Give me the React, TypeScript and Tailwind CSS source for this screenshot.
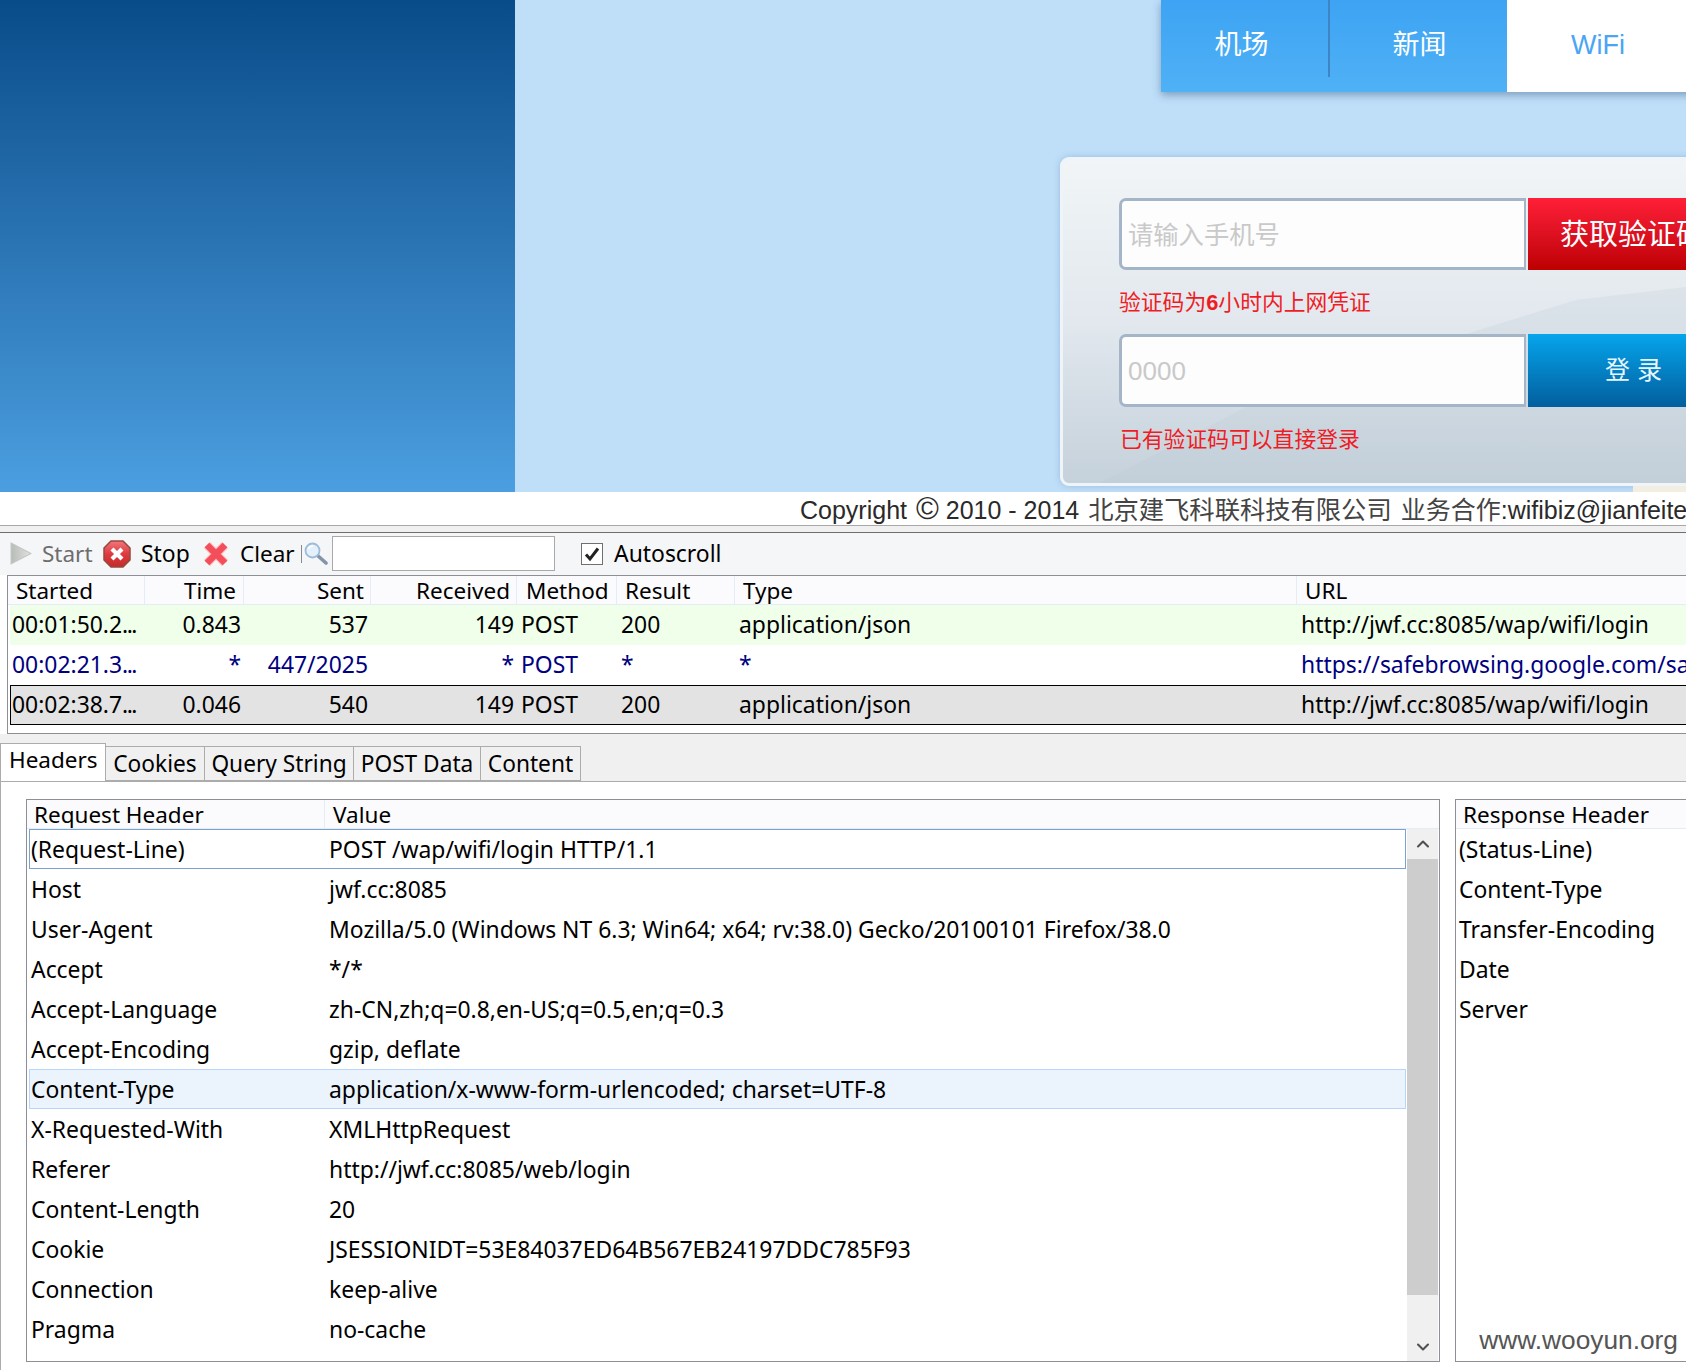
import { ChevronDown, ChevronUp } from 'lucide-react';

const cjk = '"Liberation Sans", "Noto Sans CJK SC", sans-serif';

const sessions = [
	{ started: '00:01:50.2', time: '0.843', sent: '537', received: '149', method: 'POST', result: '200', type: 'application/json', url: 'http://jwf.cc:8085/wap/wifi/login', cls: 'bg-[#efffea] text-black border-transparent' },
	{ started: '00:02:21.3', time: '*', sent: '447/2025', received: '*', method: 'POST', result: '*', type: '*', url: 'https://safebrowsing.google.com/safebrowsing/downloads', cls: 'bg-white text-[#000080] border-transparent' },
	{ started: '00:02:38.7', time: '0.046', sent: '540', received: '149', method: 'POST', result: '200', type: 'application/json', url: 'http://jwf.cc:8085/wap/wifi/login', cls: 'bg-[#e3e3e3] text-black border-black' },
];

const requestHeaders = [
	['(Request-Line)', 'POST /wap/wifi/login HTTP/1.1'],
	['Host', 'jwf.cc:8085'],
	['User-Agent', 'Mozilla/5.0 (Windows NT 6.3; Win64; x64; rv:38.0) Gecko/20100101 Firefox/38.0'],
	['Accept', '*/*'],
	['Accept-Language', 'zh-CN,zh;q=0.8,en-US;q=0.5,en;q=0.3'],
	['Accept-Encoding', 'gzip, deflate'],
	['Content-Type', 'application/x-www-form-urlencoded; charset=UTF-8'],
	['X-Requested-With', 'XMLHttpRequest'],
	['Referer', 'http://jwf.cc:8085/web/login'],
	['Content-Length', '20'],
	['Cookie', 'JSESSIONIDT=53E84037ED64B567EB24197DDC785F93'],
	['Connection', 'keep-alive'],
	['Pragma', 'no-cache'],
];

const responseHeaders = ['(Status-Line)', 'Content-Type', 'Transfer-Encoding', 'Date', 'Server'];

const tabs = [
	{ label: 'Cookies', w: 'w-[99px]' },
	{ label: 'Query String', w: 'w-[149px]' },
	{ label: 'POST Data', w: 'w-[127px]' },
	{ label: 'Content', w: 'w-[100px]' },
];

const rowClass = (i: number) => {
	if (i === 0) return 'border-[#7da2ce] bg-white';
	if (i === 6) return 'border-[#b8d6fb] bg-[#ebf3fd]';
	return 'border-transparent';
};

const App = () => {
	return (
		<div className="w-[1686px] h-[1370px] overflow-hidden bg-white font-['Noto_Sans'] text-[22.9px] text-black">
			{/* captured page */}
			<div className="flex h-[492px]">
				<div className="w-[515px] bg-gradient-to-b from-[#084c8a] to-[#4b9fe0]"></div>
				<div className="relative flex-1 min-w-0 bg-[#bfdef8] overflow-hidden pl-[545px]" style={{ fontFamily: cjk }}>
					<div className="w-[626px] flex h-[92px] ml-[101px] shadow-[0_3px_8px_rgba(40,80,120,0.45)] text-[27px]">
						<div className="w-[346px] flex bg-gradient-to-b from-[#3da3f3] to-[#4fb1f6] text-white">
							<div className="w-[169px] h-[77px] pt-[14px] pr-[6px] flex items-center justify-center border-r-2 border-[#3d85c4]">机场</div>
							<div className="flex-1 h-[77px] pt-[14px] pl-[2px] flex items-center justify-center">新闻</div>
						</div>
						<div className="flex-1 bg-white text-[#4ba4f4] pl-[64px] h-[92px] flex items-center pb-[1px]">WiFi</div>
					</div>
					<div className="relative overflow-hidden mt-[65px] h-[329px] w-[800px] rounded-[9px] border-[3px] border-[#eef4f8] bg-gradient-to-b from-[#f1f5f7] via-[#e2e8ee] to-[#c5d1db] pt-[38px] pl-[56px] shadow-[0_0_6px_rgba(90,130,170,0.35)]">
						<svg className="absolute left-0 top-0" width="800" height="329" viewBox="0 0 800 329">
							<path d="M31 326 L191 243 L422 168 L513 140 L623 127 L800 110 L800 329 L31 329 Z" fill="#b9c8d4" fillOpacity="0.2" />
						</svg>
						<div className="relative flex h-[72px]">
							<div className="w-[407px] rounded-l-[7px] border-[3px] border-r-2 border-[#a3b5c7] bg-[#fdfdfd] text-[#c9c9c9] text-[25.3px] flex items-center pl-[6px] pt-[3px]">请输入手机号</div>
							<div className="ml-[2px] w-[300px] bg-gradient-to-b from-[#ff1f37] to-[#bd0000] text-white text-[29px] flex items-center pl-[32px] pt-[4px]">获取验证码</div>
						</div>
						<div className="relative h-[64px] flex items-center pt-[3px] text-[21.8px] text-[#f01c24]">验证码为<b className="font-bold">6</b>小时内上网凭证</div>
						<div className="relative flex h-[73px]">
							<div className="w-[407px] rounded-l-[7px] border-[3px] border-r-2 border-[#a3b5c7] bg-[#fdfdfd] text-[#c9c9c9] text-[26px] flex items-center pl-[6px] pt-[1px]">0000</div>
							<div className="ml-[2px] w-[300px] bg-gradient-to-b from-[#06a5ec] to-[#035f9e] text-[#e8f6ff] text-[25px] flex items-center pl-[77px]">登 录</div>
						</div>
						<div className="relative h-[64px] flex items-center pl-[1px] pt-[2px] text-[21.8px] text-[#f01c24]">已有验证码可以直接登录</div>
					</div>
					<div className="absolute right-0 bottom-0 w-[53px] h-[6px] bg-[#f3eee2]"></div>
				</div>
			</div>
			<div className="h-[34px] border-b border-[#a8a8a8] pl-[800px] whitespace-nowrap text-[25px] leading-[37px] text-[#2a2a2a]" style={{ fontFamily: cjk }}>
				Copyright <span className="ml-[2px] text-[31px] leading-[20px]">©</span> 2010 - 2014 <span className="ml-[2px] text-[25.3px] text-[#444]">北京建飞科联科技有限公司</span> <span className="ml-[2px] text-[#444]">业务合作</span>:wifibiz@jianfeitech.com
			</div>

			{/* session inspector */}
			<div className="h-[6px] bg-[#f0f0f0]"></div>
			<div className="h-[43px] border-t border-[#6f6f6f] bg-[#f5f6f7] pb-[1px] flex items-center whitespace-nowrap">
				<svg className="ml-[10px]" width="22" height="23" viewBox="0 0 21 22">
					<defs>
						<linearGradient id="startFill" x1="0" y1="0" x2="1" y2="0">
							<stop offset="0" stopColor="#b8bcb8" />
							<stop offset="1" stopColor="#dfe2df" />
						</linearGradient>
					</defs>
					<path d="M1 1 L20 11 L1 21 Z" fill="url(#startFill)" stroke="#c2c6c2" />
				</svg>
				<span className="ml-[10px] w-[61px] text-[22.5px] text-[#6d6d6d]">Start</span>
				<svg width="28" height="28" viewBox="0 0 28 28">
					<defs>
						<linearGradient id="stopFill" x1="0" y1="0" x2="0" y2="1">
							<stop offset="0" stopColor="#f0777c" />
							<stop offset="0.5" stopColor="#de3a3f" />
							<stop offset="1" stopColor="#c22d2a" />
						</linearGradient>
					</defs>
					<path d="M8 1 H20 L27 8 V20 L20 27 H8 L1 20 V8 Z" fill="url(#stopFill)" stroke="#96483f" strokeWidth="1.5" />
					<path d="M9 9 L19 19 M19 9 L9 19" stroke="#fff" strokeWidth="4.2" />
				</svg>
				<span className="ml-[10px] w-[62px] pt-[2px]">Stop</span>
				<svg width="26" height="26" viewBox="0 0 26 26">
					<path d="M4 4 L22 22 M22 4 L4 22" stroke="#ffb4b8" strokeWidth="8.5" />
					<path d="M4 4 L22 22 M22 4 L4 22" stroke="#f34e59" strokeWidth="6.5" />
				</svg>
				<span className="ml-[11px] w-[61px] text-[22.5px]">Clear</span>
				<div className="w-px h-[18px] bg-[#8a8a8a]"></div>
				<svg className="ml-[2px]" width="24" height="23" viewBox="0 0 24 23">
					<path d="M13 13 L22 21" stroke="#8494a6" strokeWidth="3.6" strokeLinecap="round" />
					<circle cx="8.5" cy="8.5" r="7" fill="#e4f0fb" stroke="#9cbcd8" strokeWidth="1.8" />
					<path d="M4.5 7 A4.5 4.5 0 0 1 9 4" fill="none" stroke="#fff" strokeWidth="1.6" />
				</svg>
				<div className="ml-[4px] w-[223px] h-[35px] border border-[#a9a9a9] bg-white"></div>
				<div className="ml-[26px] w-[22px] h-[22px] border border-[#707070] bg-white flex items-center justify-center">
					<svg width="16" height="16" viewBox="0 0 16 16">
						<path d="M2 8.5 L6 13 L14 2.5" fill="none" stroke="#222" strokeWidth="3" />
					</svg>
				</div>
				<span className="ml-[11px] pt-[2px]">Autoscroll</span>
			</div>

			<div className="ml-[7px] h-[159px] border border-[#8c8f94] border-r-0 bg-white pl-[2px] whitespace-nowrap">
				<div className="flex h-[29px] leading-[30px] text-[22.5px] bg-[#fbfbfd] border-b border-[#e4ecf7] -ml-[2px] pl-[2px]">
					<div className="w-[135px] pl-[6px] border-r border-[#e4ecf7]">Started</div>
					<div className="w-[99px] pr-[7px] text-right border-r border-[#e4ecf7]">Time</div>
					<div className="w-[127px] pr-[6px] text-right border-r border-[#e4ecf7]">Sent</div>
					<div className="w-[146px] pr-[6px] text-right border-r border-[#e4ecf7]">Received</div>
					<div className="w-[100px] pl-[9px] border-r border-[#e4ecf7]">Method</div>
					<div className="w-[118px] pl-[8px] border-r border-[#e4ecf7]">Result</div>
					<div className="w-[562px] pl-[8px] border-r border-[#e4ecf7]">Type</div>
					<div className="flex-1 pl-[8px]">URL</div>
				</div>
				{sessions.map((s) => (
					<div key={s.started} className={`flex h-[40px] -mr-[10px] items-center border ${s.cls}`}>
						<div className="w-[134px] pl-[1px] shrink-0">
							{s.started}
							<span className="tracking-[-1.5px]">...</span>
						</div>
						<div className="w-[99px] pr-[3px] text-right shrink-0">{s.time}</div>
						<div className="w-[127px] pr-[3px] text-right shrink-0">{s.sent}</div>
						<div className="w-[146px] pr-[3px] text-right shrink-0">{s.received}</div>
						<div className="w-[100px] pl-[4px] shrink-0">{s.method}</div>
						<div className="w-[118px] pl-[4px] shrink-0">{s.result}</div>
						<div className="w-[562px] pl-[4px] shrink-0">{s.type}</div>
						<div className="pl-[4px]">{s.url}</div>
					</div>
				))}
			</div>

			<div className="h-[9px] bg-[#f0f0f0]"></div>
			<div className="flex items-end h-[38px] bg-[#f0f0f0] whitespace-nowrap">
				<div className="w-[106px] h-[38px] bg-white border border-b-0 border-[#acacac] pl-[8px] leading-[31px] text-[22.5px]">Headers</div>
				{tabs.map((t) => (
					<div key={t.label} className={`${t.w} h-[35px] border border-l-0 border-[#acacac] text-center leading-[33px] text-[22.7px] bg-[#f0f0f0]`}>
						{t.label}
					</div>
				))}
			</div>
			<div className="h-[590px] border-t border-l border-[#acacac] bg-white pt-[17px] pl-[25px] flex whitespace-nowrap">
				<div className="relative w-[1414px] h-[563px] shrink-0 border border-[#8c8f94]">
					<div className="flex h-[29px] leading-[29px] text-[22.5px] bg-[#fbfbfd] border-b border-[#e4ecf7]">
						<div className="w-[298px] pl-[7px] border-r border-[#e4ecf7]">Request Header</div>
						<div className="pl-[8px]">Value</div>
					</div>
					<div className="flex">
						<div className="w-[1380px] pl-[2px] shrink-0">
							{requestHeaders.map(([name, value], i) => (
								<div key={name} className={`flex w-[1377px] pl-[1px] pt-[2px] h-[40px] items-center border ${rowClass(i)}`}>
									<div className="w-[298px] shrink-0">{name}</div>
									<div>{value}</div>
								</div>
							))}
						</div>
						<div className="w-[31px] h-[532px] flex flex-col bg-[#f0f0f0] text-[#505050]">
							<div className="h-[30px] flex items-center justify-center"><ChevronUp size={20} strokeWidth={2.5} /></div>
							<div className="h-[436px] bg-[#cdcdcd]"></div>
							<div className="flex-1 flex items-end justify-center pb-[4px]"><ChevronDown size={20} strokeWidth={2.5} /></div>
						</div>
					</div>
				</div>
				<div className="relative ml-[15px] flex-1 h-[563px] border border-r-0 border-[#8c8f94]">
					<div className="h-[29px] leading-[29px] text-[22.5px] bg-[#fbfbfd] border-b border-[#e4ecf7] pl-[7px]">Response Header</div>
					{responseHeaders.map((name) => (
						<div key={name} className="h-[40px] flex items-center pl-[3px] pt-[2px]">{name}</div>
					))}
					<span className="absolute right-[8px] bottom-[1px] text-[26.3px] text-[#555]" style={{ fontFamily: '"Liberation Sans", sans-serif' }}>www.wooyun.org</span>
				</div>
			</div>
		</div>
	);
};

export default App;
